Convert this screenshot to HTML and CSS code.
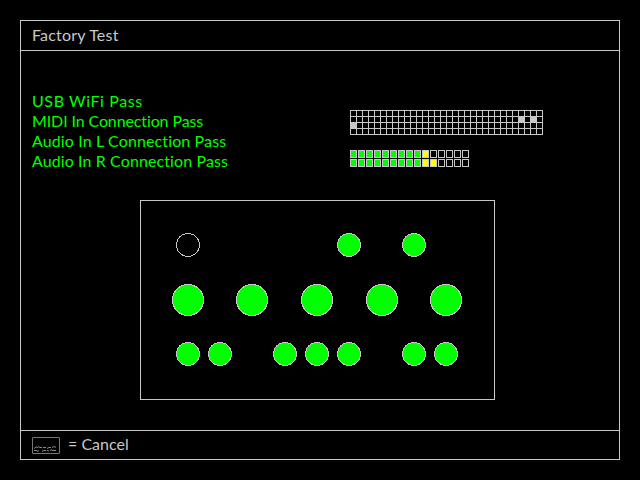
FILE: index.html
```html
<!DOCTYPE html>
<html lang="en">
<head>
<meta charset="utf-8">
<title>Factory Test</title>
<link rel="stylesheet" href="styles.css">
</head>
<body>
<main class="screen">
  <header class="bar"><span class="title">Factory Test</span></header>
  <section class="content">
    <div class="status">
      <ul class="results">
        <li><span class="usb">USB WiFi Pass</span></li>
        <li><span class="midi">MIDI In Connection Pass</span></li>
        <li><span class="left">Audio In L Connection Pass</span></li>
        <li><span class="right">Audio In R Connection Pass</span></li>
      </ul>
      <div class="monitors">
        <div class="matrix" id="matrix"></div>
        <div class="meter" id="meter-left"></div>
        <div class="meter" id="meter-right"></div>
      </div>
    </div>
    <svg class="panel" width="355" height="200" viewBox="140 200 355 200" shape-rendering="crispEdges">
      <rect class="outline" x="140.5" y="200.5" width="354" height="199"/>
      <circle class="off" cx="188" cy="245" r="11.5"/>
      <circle class="on" cx="349" cy="245" r="11.5"/>
      <circle class="on" cx="414" cy="245" r="11.5"/>
      <circle class="on" cx="188" cy="300" r="15.5"/>
      <circle class="on" cx="252" cy="300" r="15.5"/>
      <circle class="on" cx="317" cy="300" r="15.5"/>
      <circle class="on" cx="382" cy="300" r="15.5"/>
      <circle class="on" cx="446" cy="300" r="15.5"/>
      <circle class="on" cx="188" cy="354" r="11.5"/>
      <circle class="on" cx="220" cy="354" r="11.5"/>
      <circle class="on" cx="285" cy="354" r="11.5"/>
      <circle class="on" cx="317" cy="354" r="11.5"/>
      <circle class="on" cx="349" cy="354" r="11.5"/>
      <circle class="on" cx="414" cy="354" r="11.5"/>
      <circle class="on" cx="446" cy="354" r="11.5"/>
    </svg>
  </section>
  <footer class="bar foot">
    <svg class="key" width="28" height="17" viewBox="0 0 28 17">
      <rect class="key-frame" x=".5" y=".5" width="27" height="16" rx=".5"/>
      <path class="key-marks" d="M2 11.5l2-1.5 2 .5M6 9.5l2 1h2M11 10.5h3M15 11.5l2-1h2M20 10.5l2-1 2 1M2 13.5h3M5 14.5l2-1M10 14.5l2-1h2M15 13.5l2 .5M18 13.5l2-1M20 13.5h4"/>
    </svg>
    <span class="cancel">= Cancel</span>
  </footer>
</main>
<script src="monitors.js"></script>
</body>
</html>
```
FILE: styles.css
```css
* { box-sizing: border-box; }
body {
  margin: 0;
  padding: 20px;
  background: #000;
  color: #c8c8c8;
  font: 16px/20px Lato, "Open Sans", sans-serif;
  font-variant-ligatures: none;
}
.screen {
  width: 600px;
  height: 440px;
  border: 1px solid #c8c8c8;
  display: flex;
  flex-direction: column;
}
.bar {
  height: 30px;
  padding-left: 11px;
  border-bottom: 1px solid #c8c8c8;
  display: flex;
  align-items: center;
  white-space: nowrap;
}
.title, .cancel { padding-bottom: 2px; }
.title { letter-spacing: .2px; }
.foot {
  height: 29px;
  border-bottom: 0;
  border-top: 1px solid #c8c8c8;
  gap: 8px;
}
.content { flex: 1; padding: 40px 11px 0; }
.status { display: flex; height: 109px; }
.results {
  width: 318px;
  margin: 0;
  padding: 0;
  list-style: none;
  color: #00ff00;
  white-space: nowrap;
}
.usb { letter-spacing: .6px; }
.midi { letter-spacing: -.12px; }
.left { letter-spacing: .12px; }
.right { letter-spacing: .1px; }
.monitors { padding-top: 19px; }
.matrix {
  display: grid;
  grid-template-columns: repeat(32, 5px);
  grid-auto-rows: 5px;
  gap: 1px;
  width: 193px;
  height: 25px;
  padding: 1px;
  margin-bottom: 15px;
  background: #c8c8c8;
}
.matrix span { background: #000; }
.matrix .lit { background: #c8c8c8; }
.meter { display: flex; gap: 1px; height: 8px; margin-bottom: 1px; }
.meter span { width: 7px; border: 1px solid #c8c8c8; }
.meter .green { background: #00ff00; }
.meter .yellow { background: #ffff00; }
.panel { display: block; margin-left: 108px; }
.outline, .off { fill: none; stroke: #c8c8c8; }
.on { fill: #00ff00; stroke: #c8c8c8; }
.key-frame { fill: none; stroke: #777; }
.key-marks { fill: none; stroke: #999; stroke-width: .9; }
```
FILE: monitors.js
```js
const matrix = document.getElementById("matrix");
const active = new Set([60, 62, 64]);
for (let i = 0; i < 128; i++) {
  const cell = document.createElement("span");
  if (active.has(i)) cell.className = "lit";
  matrix.append(cell);
}

function drawMeter(id, level) {
  const meter = document.getElementById(id);
  for (let i = 0; i < 15; i++) {
    const cell = document.createElement("span");
    if (i < level) cell.className = i < 9 ? "green" : "yellow";
    meter.append(cell);
  }
}
drawMeter("meter-left", 10);
drawMeter("meter-right", 11);
```
